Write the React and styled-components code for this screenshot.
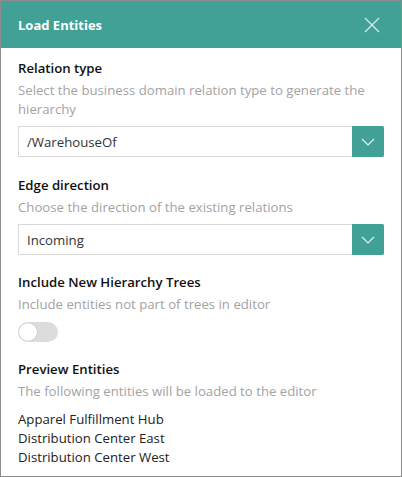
import React, { useState } from 'react'
import styled, { createGlobalStyle } from 'styled-components'

const Global = createGlobalStyle`
  html, body { margin: 0; padding: 0; background: #fff; }
  body { font-family: "Open Sans", "Noto Sans", sans-serif; }
`

const Dialog = styled.div`
  width: 402px;
  height: 477px;
  box-sizing: border-box;
  border: 1px solid #8c8c8c;
  display: flex;
  flex-direction: column;
  overflow: hidden;
`

const Header = styled.div`
  height: 47px;
  flex: none;
  background: #42a197;
  display: flex;
  align-items: center;
  justify-content: space-between;
  padding: 0 21px 0 17px;
`

const HeaderTitle = styled.div`
  color: #fff;
  font-size: 13px;
  font-weight: 700;
`

const CloseBtn = styled.button`
  border: 0;
  background: none;
  padding: 0;
  width: 16px;
  height: 16px;
  display: flex;
  cursor: pointer;
`

const Body = styled.div`
  padding: 10px 17px 0 17px;
  display: flex;
  flex-direction: column;
  gap: 17px;
`

const Section = styled.div`
  display: flex;
  flex-direction: column;
  margin-bottom: ${p => p.$extra || 0}px;
`

const Label = styled.div`
  font-size: 13.2px;
  font-weight: 600;
  line-height: 20px;
  color: #111;
`

const Hint = styled.div`
  margin-top: 3px;
  font-size: 13.2px;
  line-height: 19px;
  color: #a3a3a3;
`

const SelectBox = styled.div`
  margin-top: 7px;
  height: 31px;
  box-sizing: border-box;
  border: 1px solid #d9d9d9;
  display: flex;
  align-items: stretch;
`

const SelectValue = styled.div`
  flex: 1;
  display: flex;
  align-items: center;
  padding-left: 8px;
  font-size: 13.2px;
  color: #333;
`

const SelectButton = styled.div`
  width: 32px;
  margin: -1px -1px -1px 0;
  background: #42a197;
  display: flex;
  align-items: center;
  justify-content: center;
  border-radius: 0 2px 2px 0;
`

const Toggle = styled.div`
  margin-top: 8px;
  width: 40px;
  height: 20px;
  border-radius: 10px;
  background: ${p => (p.$on ? '#42a197' : '#dcdcdc')};
  position: relative;
  cursor: pointer;
`

const Knob = styled.div`
  position: absolute;
  top: 1px;
  left: ${p => (p.$on ? '21px' : '1px')};
  width: 18px;
  height: 18px;
  border-radius: 50%;
  background: #fff;
  box-shadow: 0 0 1px rgba(0, 0, 0, 0.3);
`

const List = styled.div`
  margin-top: 9px;
`

const Item = styled.div`
  font-size: 13.2px;
  line-height: 19px;
  color: #222;
`

const Chevron = () => (
  <svg width="14" height="8" viewBox="0 0 14 8" fill="none">
    <path d="M1 1l6 6 6-6" stroke="#dff1ee" strokeWidth="1.2" />
  </svg>
)

function Select({ value }) {
  return (
    <SelectBox>
      <SelectValue>{value}</SelectValue>
      <SelectButton>
        <Chevron />
      </SelectButton>
    </SelectBox>
  )
}

export default function App() {
  const [include, setInclude] = useState(false)
  const entities = ['Apparel Fulfillment Hub', 'Distribution Center East', 'Distribution Center West']
  return (
    <>
      <Global />
      <Dialog>
        <Header>
          <HeaderTitle>Load Entities</HeaderTitle>
          <CloseBtn>
            <svg width="16" height="16" viewBox="0 0 16 16">
              <path d="M1 1l14 14M15 1L1 15" stroke="#cfeae6" strokeWidth="1.4" />
            </svg>
          </CloseBtn>
        </Header>
        <Body>
          <Section $extra={1}>
            <Label>Relation type</Label>
            <Hint>Select the business domain relation type to generate the hierarchy</Hint>
            <Select value="/WarehouseOf" />
          </Section>
          <Section>
            <Label>Edge direction</Label>
            <Hint>Choose the direction of the existing relations</Hint>
            <Select value="Incoming" />
          </Section>
          <Section>
            <Label>Include New Hierarchy Trees</Label>
            <Hint>Include entities not part of trees in editor</Hint>
            <Toggle $on={include} onClick={() => setInclude(!include)}>
              <Knob $on={include} />
            </Toggle>
          </Section>
          <Section>
            <Label>Preview Entities</Label>
            <Hint>The following entities will be loaded to the editor</Hint>
            <List>
              {entities.map(e => (
                <Item key={e}>{e}</Item>
              ))}
            </List>
          </Section>
        </Body>
      </Dialog>
    </>
  )
}
